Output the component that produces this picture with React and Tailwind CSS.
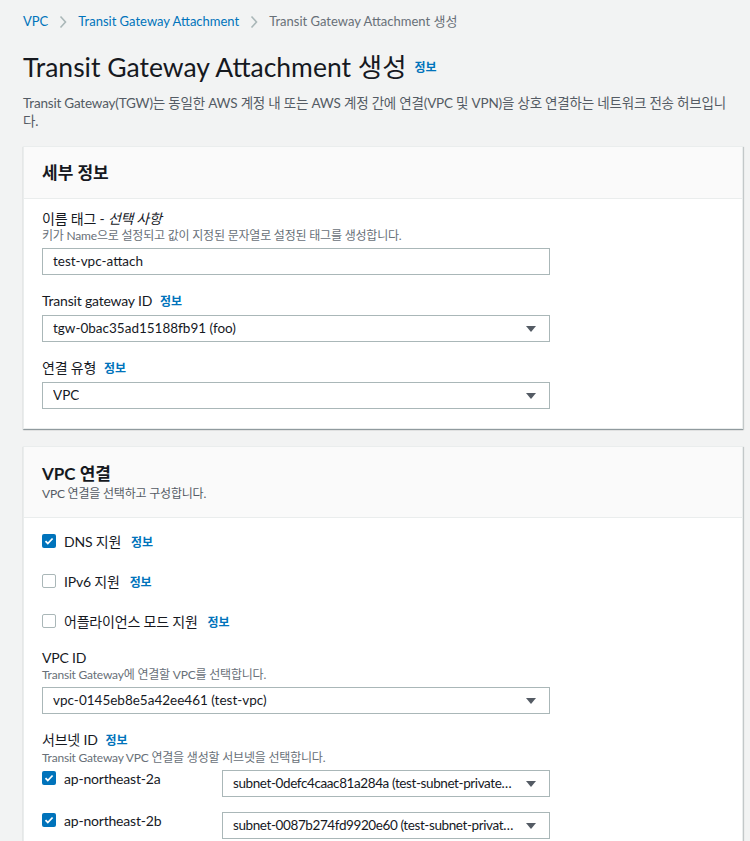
import React from "react";

const font = { fontFamily: '"Lato", "Noto Sans CJK KR", sans-serif' };

function Info() {
    return <span className="ml-2 text-[12px] font-bold text-[#0073bb]">정보</span>;
}

function Caret() {
    return (
        <svg width="12" height="8" viewBox="0 0 12 8" className="shrink-0">
            <path d="M1 1h10L6 7z" fill="#545b64" />
        </svg>
    );
}

function Chevron() {
    return (
        <svg width="8" height="14" viewBox="0 0 8 14">
            <path d="M1.5 1.5l5 5.5-5 5.5" stroke="#aab7b8" strokeWidth="1.6" fill="none" />
        </svg>
    );
}

function SelectBox({ value, className = "" }) {
    return (
        <div className={"flex h-[27px] items-center justify-between gap-[11px] border border-[#aab7b8] bg-white pl-[10px] pr-[12px] text-[13.5px] text-[#16191f] " + className}>
            <span className="truncate">{value}</span>
            <Caret />
        </div>
    );
}

function Check({ checked }) {
    return checked ? (
        <span className="grid h-[14px] w-[14px] shrink-0 place-items-center rounded-[2px] bg-[#0073bb]">
            <svg width="10" height="10" viewBox="0 0 10 10">
                <path d="M1.5 5.2l2.3 2.3L8.6 2.5" stroke="white" strokeWidth="1.8" fill="none" />
            </svg>
        </span>
    ) : (
        <span className="h-[14px] w-[14px] shrink-0 rounded-[2px] border border-[#aab7b8] bg-white" />
    );
}

function Field({ label, desc, children, className = "" }) {
    return (
        <div className={className}>
            <div className="text-[14px] leading-[18px] tracking-[-0.2px] text-[#16191f]">{label}</div>
            {desc && <div className="text-[12px] leading-[16px] tracking-[-0.2px] text-[#687078]">{desc}</div>}
            <div className="mt-[4px]">{children}</div>
        </div>
    );
}

const card = "w-[720px] border border-[#eaeded] bg-white shadow-[0_1px_1px_0_rgba(0,28,36,0.3),1px_1px_1px_0_rgba(0,28,36,0.15)]";

export default function App() {
    return (
        <div className="min-h-[841px] bg-[#f2f3f3] pl-[23px] pr-[7px]" style={font}>
            <nav className="flex h-[44px] items-center gap-[11px] text-[13px]">
                <span className="text-[#0073bb]">VPC</span>
                <Chevron />
                <span className="text-[#0073bb]">Transit Gateway Attachment</span>
                <Chevron />
                <span className="text-[#687078]">Transit Gateway Attachment 생성</span>
            </nav>
            <div className="flex h-[48px] items-center">
                <h1 className="text-[26.5px] font-normal text-[#16191f]">Transit Gateway Attachment 생성</h1>
                <Info />
            </div>
            <p className="mt-[2px] pr-[12px] text-[13.5px] leading-[18px] tracking-[-0.2px] text-[#545b64]">
                Transit Gateway(TGW)는 동일한 AWS 계정 내 또는 AWS 계정 간에 연결(VPC 및 VPN)을 상호 연결하는 네트워크 전송 허브입니다.
            </p>

            <section className={"mt-[16px] " + card}>
                <div className="flex h-[52px] items-center border-b border-[#eaeded] bg-[#fafafa] px-[18px]">
                    <h2 className="text-[17px] font-bold text-[#16191f]">세부 정보</h2>
                </div>
                <div className="px-[18px] pb-[19px] pt-[11px]">
                    <Field label={<>이름 태그 - <i>선택 사항</i></>} desc="키가 Name으로 설정되고 값이 지정된 문자열로 설정된 태그를 생성합니다.">
                        <div className="flex h-[27px] w-[508px] items-center border border-[#aab7b8] bg-white pl-[10px] text-[13.5px] text-[#16191f]">test-vpc-attach</div>
                    </Field>
                    <Field className="mt-[17px]" label={<>Transit gateway ID<Info /></>}>
                        <SelectBox value="tgw-0bac35ad15188fb91 (foo)" className="w-[508px]" />
                    </Field>
                    <Field className="mt-[17px]" label={<>연결 유형<Info /></>}>
                        <SelectBox value="VPC" className="w-[508px]" />
                    </Field>
                </div>
            </section>

            <section className={"mt-[17px] " + card}>
                <div className="flex h-[71px] flex-col justify-center border-b border-[#eaeded] bg-[#fafafa] px-[18px]">
                    <h2 className="text-[17px] font-bold leading-[24px] text-[#16191f]">VPC 연결</h2>
                    <div className="text-[12px] leading-[16px] tracking-[-0.2px] text-[#545b64]">VPC 연결을 선택하고 구성합니다.</div>
                </div>
                <div className="px-[18px] pt-[3px] pb-[20px]">
                    {[
                        ["DNS 지원", true],
                        ["IPv6 지원", false],
                        ["어플라이언스 모드 지원", false],
                    ].map(([t, c]) => (
                        <div key={t} className="flex h-[40px] items-center gap-[8px] text-[14px] tracking-[-0.2px] text-[#16191f]">
                            <Check checked={c} />
                            <span>{t}</span>
                            <span className="-ml-[6px] pt-[1px]"><Info /></span>
                        </div>
                    ))}
                    <Field className="mt-[8px]" label="VPC ID" desc="Transit Gateway에 연결할 VPC를 선택합니다.">
                        <SelectBox value="vpc-0145eb8e5a42ee461 (test-vpc)" className="w-[508px]" />
                    </Field>
                    <Field className="mt-[17px]" label={<>서브넷 ID<Info /></>} desc="Transit Gateway VPC 연결을 생성할 서브넷을 선택합니다.">
                        {[
                            ["ap-northeast-2a", "subnet-0defc4caac81a284a (test-subnet-private-a)"],
                            ["ap-northeast-2b", "subnet-0087b274fd9920e60 (test-subnet-private-b)"],
                        ].map(([az, sn]) => (
                            <div key={az} className="mb-[15px] flex items-start">
                                <div className="flex h-[16px] w-[180px] items-center gap-[8px] text-[14px] tracking-[-0.2px] text-[#16191f]">
                                    <Check checked />
                                    <span>{az}</span>
                                </div>
                                <SelectBox value={sn} className="w-[328px] tracking-[-0.4px]" />
                            </div>
                        ))}
                    </Field>
                </div>
            </section>
        </div>
    );
}
